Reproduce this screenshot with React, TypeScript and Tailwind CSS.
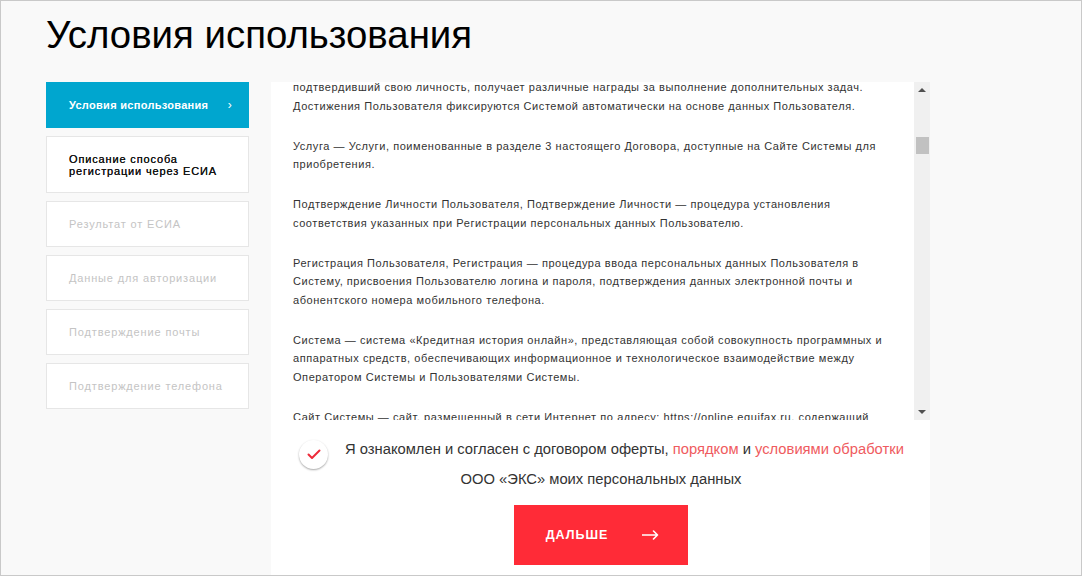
import { useState } from 'react';

const steps = [
  { label: 'Условия использования', state: 'active' },
  { label: 'Описание способа\nрегистрации через ЕСИА', state: 'done' },
  { label: 'Результат от ЕСИА', state: 'todo' },
  { label: 'Данные для авторизации', state: 'todo' },
  { label: 'Подтверждение почты', state: 'todo' },
  { label: 'Подтверждение телефона', state: 'todo' },
];

// paragraphs of the agreement, lines broken as in the page
const paragraphs: string[][] = [
  [
    'подтвердивший свою личность, получает различные награды за выполнение дополнительных задач.',
    'Достижения Пользователя фиксируются Системой автоматически на основе данных Пользователя.',
  ],
  [
    'Услуга — Услуги, поименованные в разделе 3 настоящего Договора, доступные на Сайте Системы для',
    'приобретения.',
  ],
  [
    'Подтверждение Личности Пользователя, Подтверждение Личности — процедура установления',
    'соответствия указанных при Регистрации персональных данных Пользователю.',
  ],
  [
    'Регистрация Пользователя, Регистрация — процедура ввода персональных данных Пользователя в',
    'Систему, присвоения Пользователю логина и пароля, подтверждения данных электронной почты и',
    'абонентского номера мобильного телефона.',
  ],
  [
    'Система — система «Кредитная история онлайн», представляющая собой совокупность программных и',
    'аппаратных средств, обеспечивающих информационное и технологическое взаимодействие между',
    'Оператором Системы и Пользователями Системы.',
  ],
  [
    'Сайт Системы — сайт, размещенный в сети Интернет по адресу: https://online.equifax.ru, содержащий',
    'информацию о Системе и предоставляющий доступ к Услугам.',
  ],
];

function StepItem({ label, state }: { label: string; state: string }) {
  if (state === 'active') {
    return (
      <div className="h-[46px] shrink-0 bg-[#00a6cf] flex items-center justify-between pl-[23px] pr-[17px] text-white text-[11px] font-bold tracking-[0.3px]">
        <span>{label}</span>
        <span className="text-[12px] font-normal">›</span>
      </div>
    );
  }
  const multi = label.includes('\n');
  return (
    <div
      className={`${multi ? 'h-[57px]' : 'h-[46px]'} shrink-0 bg-white border border-[#e6e6e6] flex items-center pl-[22px] text-[11px] leading-[12px] tracking-[0.85px] whitespace-pre-line ${
        state === 'done' ? 'text-[#141414] [text-shadow:0_0_0.2px_#141414]' : 'text-[#c4c4c4]'
      }`}
    >
      {label}
    </div>
  );
}

function Scrollbar() {
  return (
    <div className="w-[16px] shrink-0 bg-[#f0f0f0] flex flex-col items-center justify-between py-[6px] relative">
      <div className="w-0 h-0 border-l-[4px] border-r-[4px] border-b-[4px] border-l-transparent border-r-transparent border-b-[#505050]" />
      <div className="absolute left-[2px] top-[55px] w-[13px] h-[17px] bg-[#c1c1c1]" />
      <div className="w-0 h-0 border-l-[4px] border-r-[4px] border-t-[4px] border-l-transparent border-r-transparent border-t-[#505050]" />
    </div>
  );
}

export default function App() {
  const [agreed, setAgreed] = useState(true);

  return (
    <div
      className="w-[1082px] h-[576px] bg-[#f9f9f9] border border-[#c9c9c9] overflow-hidden flex flex-col"
      style={{ fontFamily: '"Liberation Sans", Arial, sans-serif' }}
    >
      <h1 className="pl-[45px] pt-[12px] h-[81px] shrink-0 text-[38.4px] leading-[44px] text-black font-normal">
        Условия использования
      </h1>

      <div className="flex flex-1 min-h-0 pl-[45px]">
        {/* Steps */}
        <div className="w-[203px] shrink-0 flex flex-col gap-[8px]">
          {steps.map((s, i) => (
            <StepItem key={i} label={s.label} state={s.state} />
          ))}
        </div>

        {/* Agreement panel */}
        <div className="ml-[22px] w-[659px] bg-white flex flex-col">
          <div className="h-[338px] shrink-0 flex overflow-hidden">
            <div className="flex-1 pl-[22px] overflow-hidden text-[11px] leading-[18.5px] tracking-[0.56px] text-[#333] whitespace-nowrap">
              <div className="-mt-[4px] flex flex-col gap-[21.5px]">
                {paragraphs.map((p, i) => (
                  <p key={i}>
                    {p.map((line, j) => (
                      <span key={j} className="block">{line}</span>
                    ))}
                  </p>
                ))}
              </div>
            </div>
            <Scrollbar />
          </div>

          <div className="flex items-start pl-[28px] pt-[14px]">
            <button
              onClick={() => setAgreed(!agreed)}
              className="w-[29px] h-[29px] mt-[6px] rounded-full bg-white shadow-[0_1px_2px_rgba(0,0,0,0.35)] flex items-center justify-center shrink-0"
            >
              {agreed && (
                <svg width="14" height="11" viewBox="0 0 14 11" fill="none">
                  <path d="M1.5 5.5 L5 9 L12.5 1.5" stroke="#ee2b3a" strokeWidth="2" strokeLinecap="round" strokeLinejoin="round" />
                </svg>
              )}
            </button>
            <div className="ml-[17px] w-[512px] text-center text-[14.75px] leading-[30px] text-[#333]">
              <div className="whitespace-nowrap">
                Я ознакомлен и согласен с договором оферты,{' '}
                <a className="text-[#ef5b60]">порядком</a> и{' '}
                <a className="text-[#ef5b60]">условиями обработки</a>
              </div>
              <div className="whitespace-nowrap">ООО «ЭКС» моих персональных данных</div>
            </div>
          </div>

          <div className="flex justify-center pt-[11px]">
            <button className="w-[174px] h-[60px] bg-[#ff2b37] text-white flex items-center justify-center gap-[34px] pl-[4px] text-[12.5px] font-bold tracking-[1px]">
              <span>ДАЛЬШЕ</span>
              <svg width="17" height="10" viewBox="0 0 17 10" fill="none">
                <path d="M0.5 5 H15.5 M11.5 1 L15.5 5 L11.5 9" stroke="#fff" strokeWidth="1.6" strokeLinecap="round" strokeLinejoin="round" />
              </svg>
            </button>
          </div>
        </div>
      </div>
    </div>
  );
}
